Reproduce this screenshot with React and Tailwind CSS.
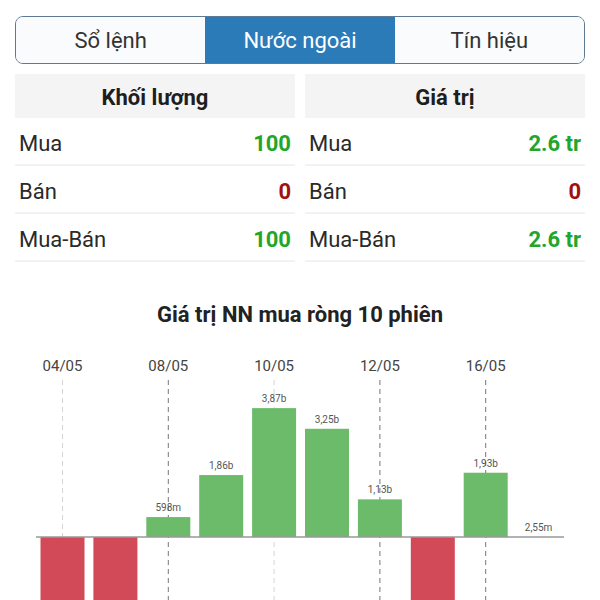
import { useState } from 'react';

const TABS = ['Sổ lệnh', 'Nước ngoài', 'Tín hiệu'];

const VOLUME_ROWS = [
  { label: 'Mua', value: '100', up: true },
  { label: 'Bán', value: '0', up: false },
  { label: 'Mua-Bán', value: '100', up: true },
];

const VALUE_ROWS = [
  { label: 'Mua', value: '2.6 tr', up: true },
  { label: 'Bán', value: '0', up: false },
  { label: 'Mua-Bán', value: '2.6 tr', up: true },
];

// net foreign value per session, in billions
const SESSIONS = [
  { v: -3.2 },
  { v: -3.2 },
  { v: 0.598, label: '598m' },
  { v: 1.86, label: '1,86b' },
  { v: 3.87, label: '3,87b' },
  { v: 3.25, label: '3,25b' },
  { v: 1.13, label: '1,13b' },
  { v: -3.2 },
  { v: 1.93, label: '1,93b' },
  { v: 0.00255, label: '2,55m' },
];

const DATES = [
  { i: 0, text: '04/05', faint: true },
  { i: 2, text: '08/05' },
  { i: 4, text: '10/05', faint: true },
  { i: 6, text: '12/05' },
  { i: 8, text: '16/05' },
];

const BASE = 197;
const SCALE = 33.3;
const STEP = 52.9;
const X0 = 62.5;
const BAR_W = 44;

const StatPanel = ({ title, rows }) => (
  <div className="flex flex-col">
    <div className="h-[44px] pt-[3px] bg-[#f4f4f4] flex items-center justify-center text-[22px] font-bold text-[#1e1e1e]">
      {title}
    </div>
    {rows.map(r => (
      <div key={r.label} className="h-[48px] pt-[4px] flex items-center justify-between px-[4px] border-b-2 border-[#f2f2f2] text-[22px]">
        <span className="text-[#2a2a2a]">{r.label}</span>
        <span className={`font-bold ${r.up ? 'text-[#22a62a]' : 'text-[#a31010]'}`}>{r.value}</span>
      </div>
    ))}
  </div>
);

const NetChart = () => (
  <svg width="600" height="260" className="block" style={{ fontFamily: 'Roboto, sans-serif' }}>
    {DATES.map(d => {
      const x = X0 + d.i * STEP;
      return (
        <g key={d.text}>
          <text x={x} y={31} textAnchor="middle" fontSize="15" fill="#444">{d.text}</text>
          <line x1={x} y1={40} x2={x} y2={260} stroke={d.faint ? '#d6d6d6' : '#777'} strokeWidth="1" strokeDasharray="5 4" />
        </g>
      );
    })}
    {SESSIONS.map((s, i) => {
      const cx = X0 + i * STEP;
      const h = Math.abs(s.v) * SCALE;
      const up = s.v >= 0;
      return (
        <g key={i}>
          {h > 1 && (
            <rect x={cx - BAR_W / 2} y={up ? BASE - h : BASE} width={BAR_W} height={h} fill={up ? '#6cbb6a' : '#d24a58'} />
          )}
          {s.label && (
            <text x={cx} y={up ? BASE - h - 6 : BASE + 12} textAnchor="middle" fontSize="10" fill="#555">{s.label}</text>
          )}
        </g>
      );
    })}
    <line x1="36" y1={BASE} x2="564" y2={BASE} stroke="#999" strokeWidth="1.5" />
  </svg>
);

export default function App() {
  const [tab, setTab] = useState(1);

  return (
    <div className="w-[600px] h-[600px] overflow-hidden bg-white font-['Roboto',sans-serif]">
      <div className="px-[15px] pt-[16px]">
        <div className="h-[48px] grid grid-cols-3 border-[1.5px] border-[#5e7a92] rounded-[8px] overflow-hidden">
          {TABS.map((t, i) => (
            <button
              key={t}
              onClick={() => setTab(i)}
              className={`flex items-center justify-center text-[22px] ${tab === i ? 'bg-[#2b7bb9] text-white' : 'bg-[#fafbfc] text-[#333]'}`}
            >
              {t}
            </button>
          ))}
        </div>

        <div className="mt-[10px] grid grid-cols-2 gap-[10px]">
          <StatPanel title="Khối lượng" rows={VOLUME_ROWS} />
          <StatPanel title="Giá trị" rows={VALUE_ROWS} />
        </div>
      </div>

      <h2 className="mt-[38px] text-center text-[22px] font-bold text-[#222] leading-[30px]">
        Giá trị NN mua ròng 10 phiên
      </h2>
      <div className="mt-[10px]">
        <NetChart />
      </div>
    </div>
  );
}
